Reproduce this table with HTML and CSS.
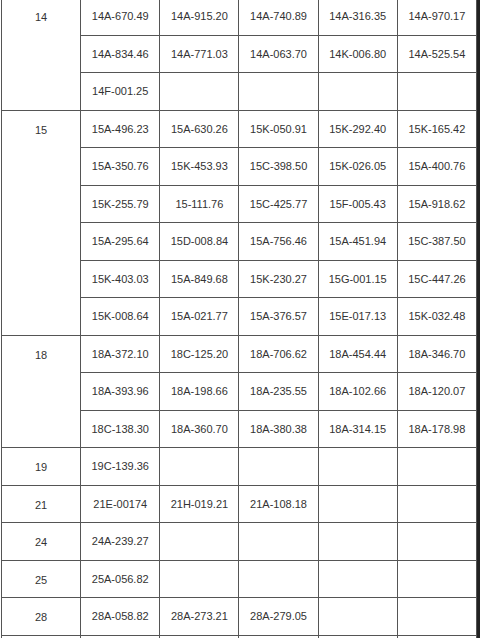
FILE: index.html
```html
<!DOCTYPE html>
<html>
<head>
<meta charset="utf-8">
<link rel="stylesheet" href="styles.css">
</head>
<body>
<div class="page">
<table class="grid">
<colgroup><col class="c"><col class="c"><col class="c"><col class="c"><col class="c"><col class="c"></colgroup>
<tbody>
<tr><td class="grp" rowspan="3">14</td><td>14A-670.49</td><td>14A-915.20</td><td>14A-740.89</td><td>14A-316.35</td><td>14A-970.17</td></tr>
<tr><td>14A-834.46</td><td>14A-771.03</td><td>14A-063.70</td><td>14K-006.80</td><td>14A-525.54</td></tr>
<tr><td>14F-001.25</td><td></td><td></td><td></td><td></td></tr>
<tr><td class="grp" rowspan="6">15</td><td>15A-496.23</td><td>15A-630.26</td><td>15K-050.91</td><td>15K-292.40</td><td>15K-165.42</td></tr>
<tr><td>15A-350.76</td><td>15K-453.93</td><td>15C-398.50</td><td>15K-026.05</td><td>15A-400.76</td></tr>
<tr><td>15K-255.79</td><td>15-111.76</td><td>15C-425.77</td><td>15F-005.43</td><td>15A-918.62</td></tr>
<tr><td>15A-295.64</td><td>15D-008.84</td><td>15A-756.46</td><td>15A-451.94</td><td>15C-387.50</td></tr>
<tr><td>15K-403.03</td><td>15A-849.68</td><td>15K-230.27</td><td>15G-001.15</td><td>15C-447.26</td></tr>
<tr><td>15K-008.64</td><td>15A-021.77</td><td>15A-376.57</td><td>15E-017.13</td><td>15K-032.48</td></tr>
<tr><td class="grp" rowspan="3">18</td><td>18A-372.10</td><td>18C-125.20</td><td>18A-706.62</td><td>18A-454.44</td><td>18A-346.70</td></tr>
<tr><td>18A-393.96</td><td>18A-198.66</td><td>18A-235.55</td><td>18A-102.66</td><td>18A-120.07</td></tr>
<tr><td>18C-138.30</td><td>18A-360.70</td><td>18A-380.38</td><td>18A-314.15</td><td>18A-178.98</td></tr>
<tr><td class="grp">19</td><td>19C-139.36</td><td></td><td></td><td></td><td></td></tr>
<tr><td class="grp">21</td><td>21E-00174</td><td>21H-019.21</td><td>21A-108.18</td><td></td><td></td></tr>
<tr><td class="grp">24</td><td>24A-239.27</td><td></td><td></td><td></td><td></td></tr>
<tr><td class="grp">25</td><td>25A-056.82</td><td></td><td></td><td></td><td></td></tr>
<tr><td class="grp">28</td><td>28A-058.82</td><td>28A-273.21</td><td>28A-279.05</td><td></td><td></td></tr>
<tr><td class="grp"></td><td></td><td></td><td></td><td></td><td></td></tr>
</tbody>
</table>
<div class="edge"></div>
</div>
</body>
</html>
```
FILE: styles.css
```css
html, body {
  margin: 0;
  padding: 0;
  background: #fff;
  overflow: hidden;
}
.page {
  display: flex;
  align-items: flex-start;
  height: 638px;
  overflow: hidden;
}
.grid {
  border-collapse: collapse;
  table-layout: fixed;
  width: 476px;
  margin: -3px 0 0 1px;
  font-family: "Liberation Sans", Arial, sans-serif;
  font-size: 11px;
  color: #333;
  flex: none;
}
.grid col.c {
  width: 79px;
}
.grid tr {
  height: 37.5px;
}
.grid td {
  border: 1px solid #555;
  text-align: center;
  vertical-align: middle;
  padding: 0;
  white-space: nowrap;
}
.grid td.grp {
  vertical-align: top;
  padding-top: 13px;
}
.edge {
  flex: 1;
  align-self: stretch;
  background: #222;
}
```
